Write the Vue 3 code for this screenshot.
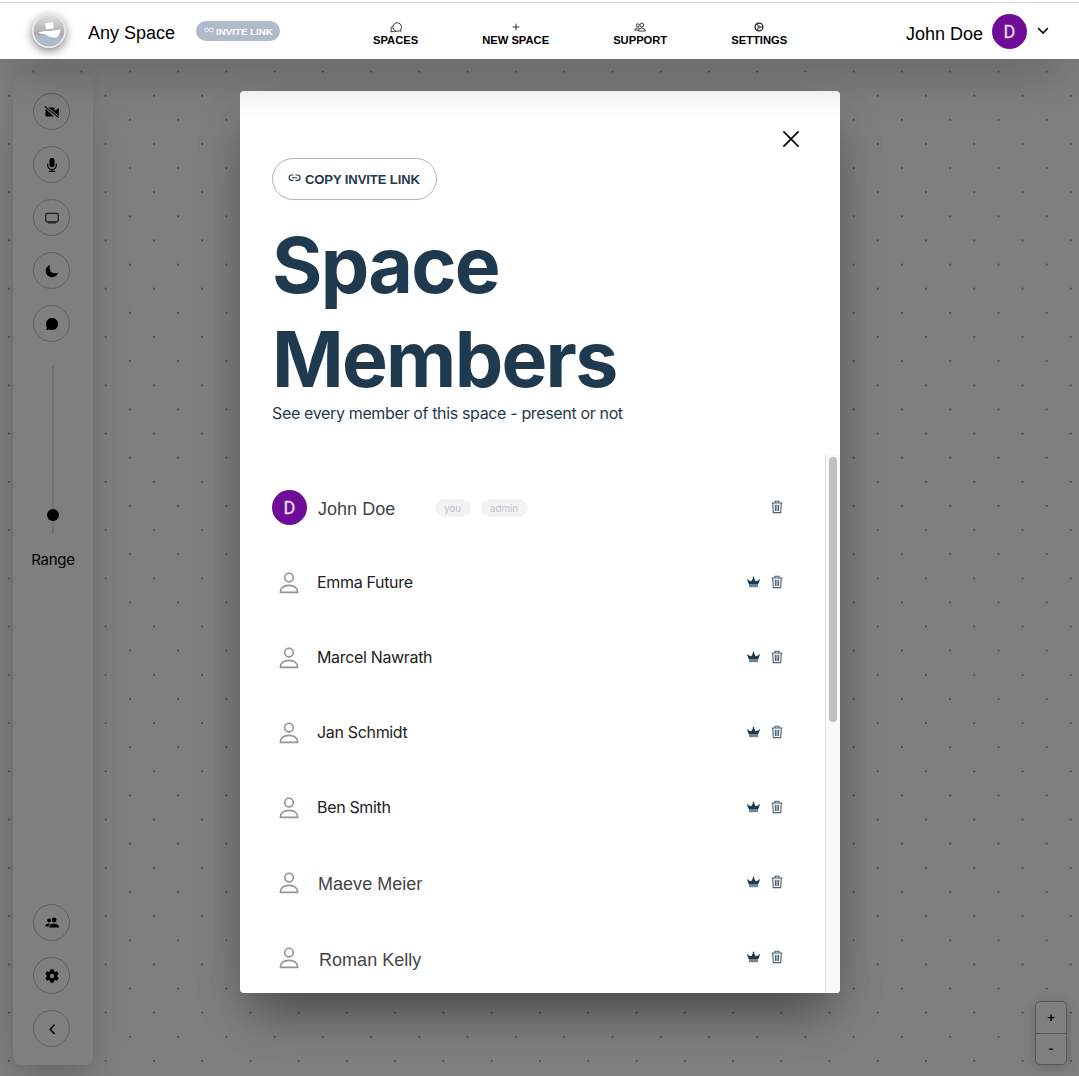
<script setup>
const pitch = 48.26
const dots = (() => {
  let d = ''
  for (let r = 0; r < 43; r++) {
    const y = 71.6 + (r * pitch) / 2
    const x0 = r % 2 ? 9.1 : 33.3
    for (let c = 0; c < 23; c++) d += `M${(x0 + c * pitch).toFixed(2)} ${y.toFixed(2)}h.01`
  }
  return d
})()

const nav = [
  { label: 'SPACES', icon: 'chat' },
  { label: 'NEW SPACE', icon: 'plus' },
  { label: 'SUPPORT', icon: 'people' },
  { label: 'SETTINGS', icon: 'cog' },
]
const tools = ['video', 'mic', 'screen', 'moon', 'bubble']
const members = [
  { name: 'John Doe', me: true, alt: true },
  { name: 'Emma Future' },
  { name: 'Marcel Nawrath' },
  { name: 'Jan Schmidt' },
  { name: 'Ben Smith' },
  { name: 'Maeve Meier', alt: true },
  { name: 'Roman Kelly', alt: true, shift: true },
]
</script>

<template>
  <div class="app">
    <svg class="dots" width="1079" height="1076"><path :d="dots" /></svg>

    <aside class="sidebar">
      <button v-for="t in tools" :key="t" class="round">
        <svg width="16" height="16" viewBox="0 0 16 16">
          <template v-if="t === 'video'">
            <path d="M4.1 3.5H9.6Q10.6 3.5 10.6 4.5V7L14.8 4V12.6L14.2 12.9ZM1.5 4.7L10 12.6H2.4Q1.4 12.6 1.4 11.6Z" />
            <path d="M1 2.5L14.8 13.6" stroke="#000" stroke-width="1.1" />
            <path d="M2.3 2.6L15 12.5" stroke="#7f7f7f" stroke-width=".9" />
          </template>
          <template v-else-if="t === 'mic'">
            <rect x="5.5" y="1" width="5" height="9.2" rx="2.5" />
            <path d="M3.7 7V8.3a4.3 4.3 0 0 0 8.6 0V7M8 12.5V14.4M5.4 14.4H10.6" fill="none" stroke="#000" stroke-width="1.2" stroke-linecap="round" />
          </template>
          <template v-else-if="t === 'screen'">
            <rect x="1.7" y="3.3" width="12.6" height="8.6" rx="1.6" fill="none" stroke="#1a1a1a" stroke-width="1.2" />
            <path d="M4 12.9H12" stroke="#1a1a1a" stroke-width="1.1" />
          </template>
          <path v-else-if="t === 'moon'" d="M6 1.9C.6 3.6.5 11 4.6 13.2 8.4 15.4 13 13.6 14.3 9.8 8.2 11.8 4.2 7.8 6 1.9Z" />
          <path v-else d="M8.1 2A6 6 0 1 1 5.5 13.4L2.3 14 2.8 11A6 6 0 0 1 8.1 2Z" />
        </svg>
      </button>
      <div class="slider"><i></i></div>
      <span class="range">Range</span>
      <button class="round bottom">
        <svg width="16" height="16" viewBox="0 0 16 16">
          <circle cx="5.1" cy="5.4" r="1.9" /><circle cx="10.1" cy="5" r="2.4" />
          <path d="M5.4 12.5C5.4 9.7 7.6 8.7 10.1 8.7S15 9.7 15 12.5ZM1.2 11.6C1.2 9.4 3 8.4 5 8.4Q6 8.4 6.7 8.8C5.2 9.6 4.6 10.5 4.5 11.6Z" />
        </svg>
      </button>
      <button class="round">
        <svg width="16" height="16" viewBox="0 0 16 16">
          <path fill-rule="evenodd" d="M6.5 1.3H9.5L10 3.2 11.2 3.9 13.1 3.3 14.7 6 13.3 7.3V8.7L14.7 10 13.1 12.7 11.2 12.1 10 12.8 9.5 14.7H6.5L6 12.8 4.8 12.1 2.9 12.7 1.3 10 2.7 8.7V7.3L1.3 6 2.9 3.3 4.8 3.9 6 3.2ZM8 5.8A2.2 2.2 0 1 0 8 10.2 2.2 2.2 0 0 0 8 5.8Z" />
        </svg>
      </button>
      <button class="round">
        <svg width="16" height="16" viewBox="0 0 16 16"><path d="M10.2 4L6.2 8.2 10.2 12.4" fill="none" stroke="#000" stroke-width="1.5" stroke-linecap="round" /></svg>
      </button>
    </aside>

    <div class="zoom"><button>+</button><button>-</button></div>

    <section class="modal">
      <button class="close">
        <svg width="18" height="18" viewBox="0 0 18 18"><path d="M1.4 1.4L16.6 16.6M16.6 1.4L1.4 16.6" stroke="#000" stroke-width="1.7" /></svg>
      </button>
      <button class="copy">
        <svg width="13" height="8" viewBox="0 0 13 8"><path d="M5.4 1H3.8a2.7 2.7 0 0 0 0 5.4H5.4M7.6 1H9.4a2.7 2.7 0 0 1 0 5.4H7.6M4 3.7H9.2" fill="none" stroke="#1f3a4f" stroke-width="1.1" /></svg>
        <span>COPY INVITE LINK</span>
      </button>
      <h1>Space<br />Members</h1>
      <p class="sub">See every member of this space - present or not</p>
      <div class="scroller">
        <ul class="list">
          <li v-for="m in members" :key="m.name">
            <span v-if="m.me" class="avatar">D</span>
            <span v-else class="person">
              <svg width="20" height="22" viewBox="0 0 20 22" fill="none" stroke="#949494" stroke-width="1.6">
                <circle cx="10" cy="5.6" r="4.3" />
                <path d="M1.3 20.4H18.7C18.7 15.8 15.2 13.4 10 13.4S1.3 15.8 1.3 20.4Z" stroke-linejoin="round" />
              </svg>
            </span>
            <span class="name" :class="{ alt: m.alt, shift: m.shift }">{{ m.name }}</span>
            <template v-if="m.me"><span class="tag you">you</span><span class="tag">admin</span></template>
            <span class="actions">
              <svg v-if="!m.me" width="13" height="12" viewBox="0 0 13 12" fill="#1f3a4f">
                <path d="M0 3.4L1 3.2 1.5 4.2 4.3 5.3 5.9 2.3 5.8 1 6.5.5 7.2 1 7.1 2.3 8.7 5.3 11.5 4.2 12 3.2 13 3.4 12.6 4.5 11.1 8.6H1.9L.4 4.5Z" />
                <path d="M2 8.6H11V11.2H2Z" opacity=".62" />
              </svg>
              <svg width="12" height="14" viewBox="0 0 12 14" fill="none" stroke="#4b6070" stroke-width="1.1">
                <path d="M.7 3H11.3M4 2.8V1.3H8V2.8M1.7 3.3L2.3 12.6H9.7L10.3 3.3M4.3 4.7L4.5 11M6 4.7V11M7.7 4.7L7.5 11" />
              </svg>
            </span>
          </li>
        </ul>
        <div class="bar"><i></i></div>
      </div>
    </section>

    <header class="header">
      <div class="logo">
        <svg width="34" height="34" viewBox="0 0 34 34">
          <defs><linearGradient id="sky" x1="0" y1="0" x2="0" y2="1"><stop offset="0" stop-color="#e0e0e0" /><stop offset=".7" stop-color="#a2a2a2" /></linearGradient></defs>
          <circle cx="17" cy="17" r="16" fill="url(#sky)" />
          <path d="M2 21.5H32A16 16 0 0 1 2 21.5Z" fill="#b0bacb" />
          <path d="M13 9.2L21 7.9 21.8 14.2 14.2 15.3Z" fill="#fff" />
          <path d="M5.7 18.7Q11 16.7 15 17Q20 16.8 28.5 15.4Q28.2 21.5 23.5 23.8Q18 23.8 13.2 20.5Q10 19.6 5.7 18.7Z" fill="#fff" />
          <circle cx="17" cy="17" r="16" fill="none" stroke="#e2e4e8" stroke-width="1.6" />
        </svg>
      </div>
      <span class="space">Any Space</span>
      <span class="invite">
        <svg width="10" height="7" viewBox="0 0 10 7" fill="none" stroke="#e1e6ee" stroke-width="1.1"><circle cx="2.6" cy="3" r="1.9" /><circle cx="7.4" cy="3" r="1.9" /><path d="M3.5 3h3" /></svg>
        <span>INVITE LINK</span>
      </span>
      <nav>
        <a v-for="n in nav" :key="n.label">
          <svg width="12" height="12" viewBox="0 0 12 12" fill="none" stroke="#222" stroke-width=".9">
            <template v-if="n.icon === 'chat'">
              <path d="M10.6 8.6L11.2 10.2 9.2 9.8A4.3 4.3 0 1 1 10.6 8.6ZM2.4 5.2A3 3 0 0 0 1.2 8.6L.9 10.9 3.2 10.5A3.4 3.4 0 0 0 6 10.3" />
            </template>
            <path v-else-if="n.icon === 'plus'" d="M6 2.6V9.4M2.6 6H9.4" />
            <template v-else-if="n.icon === 'people'">
              <circle cx="7.8" cy="4" r="1.9" /><circle cx="3.7" cy="4.3" r="1.5" />
              <path d="M4.3 10Q4.5 7 7.8 7T11.3 10ZM4.2 9.1H.9Q1 6.9 3.8 6.8L5 7.2" />
            </template>
            <template v-else>
              <circle cx="6" cy="6" r="3.9" stroke-width="1.3" /><circle cx="6" cy="6" r="1.1" />
              <path d="M7.1 6H9.8M5.4 6.9L4.1 9.2M5.4 5.1L4.1 2.8" />
            </template>
          </svg>
          <b>{{ n.label }}</b>
        </a>
      </nav>
      <div class="user">
        <span>John Doe</span>
        <span class="avatar">D</span>
        <svg width="12" height="8" viewBox="0 0 12 8"><path d="M1.2 1.2L6 6 10.8 1.2" fill="none" stroke="#111" stroke-width="1.7" /></svg>
      </div>
    </header>
  </div>
</template>

<style>
body { margin: 0; background: #7f7f7f; }
</style>

<style scoped>
.app { position: relative; width: 1079px; height: 1076px; overflow: hidden; background: #7f7f7f; font-family: "Liberation Sans", Arial, sans-serif; }
.app *, .app { box-sizing: border-box; }
button { padding: 0; background: none; border: 0; font: inherit; color: inherit; }
svg { display: block; flex: none; }
.dots { position: absolute; inset: 0; }
.dots path { fill: none; stroke: #555; stroke-width: 2.3; stroke-linecap: round; }

.header { position: absolute; inset: 0 0 auto 0; height: 59px; padding-top: 3px; display: flex; align-items: center; background: linear-gradient(#fff 2px, #d6d6d6 2px, #d6d6d6 3px, #fff 3px); box-shadow: 0 25px 50px -12px rgba(0,0,0,.25); }
.logo { width: 34px; height: 34px; margin-left: 32px; border-radius: 50%; box-shadow: 0 3px 10px rgba(0,0,0,.5); }
.space { width: 108px; margin-left: 22px; padding-top: 3px; font-size: 18px; line-height: 22px; white-space: nowrap; }
.invite { display: flex; align-items: center; gap: 2px; width: 84px; height: 20px; padding-left: 8px; border-radius: 10px; background: #b0bacb; color: #fff; font-weight: 700; font-size: 9.75px; white-space: nowrap; }
.invite span { padding-top: 1px; }
.invite svg { margin-top: -2px; }
nav { display: flex; align-items: center; gap: 64px; margin-left: 93px; padding-top: 6px; }
nav a { display: flex; flex-direction: column; align-items: center; font-size: 11.2px; line-height: 13px; color: #000; white-space: nowrap; }
nav b { margin-top: 1px; }
.user { display: flex; align-items: center; margin-left: auto; margin-right: 30px; font-size: 18px; }
.user > span:first-child { padding-top: 7px; margin-right: 9px; }
.user svg { margin-left: 10px; }
.avatar { display: flex; align-items: center; justify-content: center; flex: none; width: 35px; height: 35px; border-radius: 50%; background: #700d98; color: #eadcf1; font: 400 18px Roboto, sans-serif; -webkit-text-stroke: .3px #eadcf1; }

.sidebar { position: absolute; left: 13px; top: 75px; width: 80px; height: 990px; padding: 18px 0 18px; display: flex; flex-direction: column; align-items: center; gap: 16px; border-radius: 8px; background: #7f7f7f; box-shadow: 0 25px 50px -12px rgba(0,0,0,.25), 0 0 14px rgba(0,0,0,.05); }
.round { display: flex; align-items: center; justify-content: center; flex: none; width: 37px; height: 37px; margin-right: 3px; border: 1px solid #5a5f6b; border-radius: 50%; padding-left: 1px; }
.slider { display: flex; align-items: flex-end; justify-content: center; width: 2px; height: 168px; margin-top: 8px; padding-bottom: 13px; background: #727276; flex: none; }
.slider i { flex: none; width: 12px; height: 12px; border-radius: 50%; background: #000; }
.range { font: 400 15px/20px Inter, sans-serif; letter-spacing: -.3px; }
.bottom { margin-top: auto; }

.zoom { position: absolute; left: 1035px; top: 1001px; width: 32px; height: 64px; display: flex; flex-direction: column; border: 1px solid #555a62; border-radius: 5px; background: #7f7f7f; box-shadow: 0 2px 12px rgba(0,0,0,.2); font-size: 13px; font-weight: 700; }
.zoom button { flex: 1; }
.zoom button + button { border-top: 1px solid #555a62; }

.modal { position: absolute; left: 240px; top: 91px; width: 600px; height: 902px; padding: 67px 0 0 32px; border-radius: 4px; background: #fff; color: #1f3a4f; box-shadow: 0 25px 50px -12px rgba(0,0,0,.27), 0 25px 50px -12px rgba(0,0,0,.27); font-family: Inter, sans-serif; display: flex; flex-direction: column; align-items: flex-start; }
.close { position: absolute; left: 542px; top: 39px; }
.copy { display: flex; align-items: center; gap: 4px; width: 165px; height: 42px; padding-left: 16px; border: 1px solid #aab4c8; border-radius: 21px; font: 700 13px "Liberation Sans", sans-serif; letter-spacing: -.08px; white-space: nowrap; flex: none; }
.copy svg { margin: -3px 0 0 -1px; }
h1 { margin: 18px 0 0; font-size: 77px; line-height: 94px; font-weight: 700; letter-spacing: -1.75px; height: 188px; white-space: nowrap; flex: none; }
.sub { margin: -3px 0 0; font-size: 16px; line-height: 20px; letter-spacing: -.35px; white-space: nowrap; }
.scroller { display: flex; width: 568px; height: 539px; margin-top: auto; overflow: hidden; flex: none; border-bottom-right-radius: 4px; }
.list { flex: 1; margin: 0; padding: 16px 42px 0 0; list-style: none; }
li { display: flex; align-items: center; height: 75px; }
.person { width: 35px; display: flex; justify-content: center; flex: none; padding-right: 1px; }
.name { margin: -2px 0 0 10px; font-size: 16px; color: #222; white-space: nowrap; letter-spacing: -.33px; }
.name.alt { margin: 0 0 0 11px; padding-top: 3px; font: 400 18px "Liberation Sans", sans-serif; letter-spacing: .03px; color: #444; }
.name.shift { margin-left: 12px; padding-top: 5px; }
.tag { height: 18px; padding: 0 9.5px; margin-left: 10px; border-radius: 9px; background: #f3f3f4; color: #b9c0d2; font-size: 9.6px; line-height: 19px; letter-spacing: .05px; }
.tag.you { margin-left: 39.5px; }
.actions { display: flex; align-items: center; gap: 11px; margin-left: auto; margin-top: -1px; }
.bar { width: 15px; padding: 3px 0 0 3px; border-left: 1px solid #e3e3e3; background: #f9f9f9; }
.bar i { display: block; width: 8px; height: 265px; border-radius: 4px; background: #c0c0c0; }
</style>
